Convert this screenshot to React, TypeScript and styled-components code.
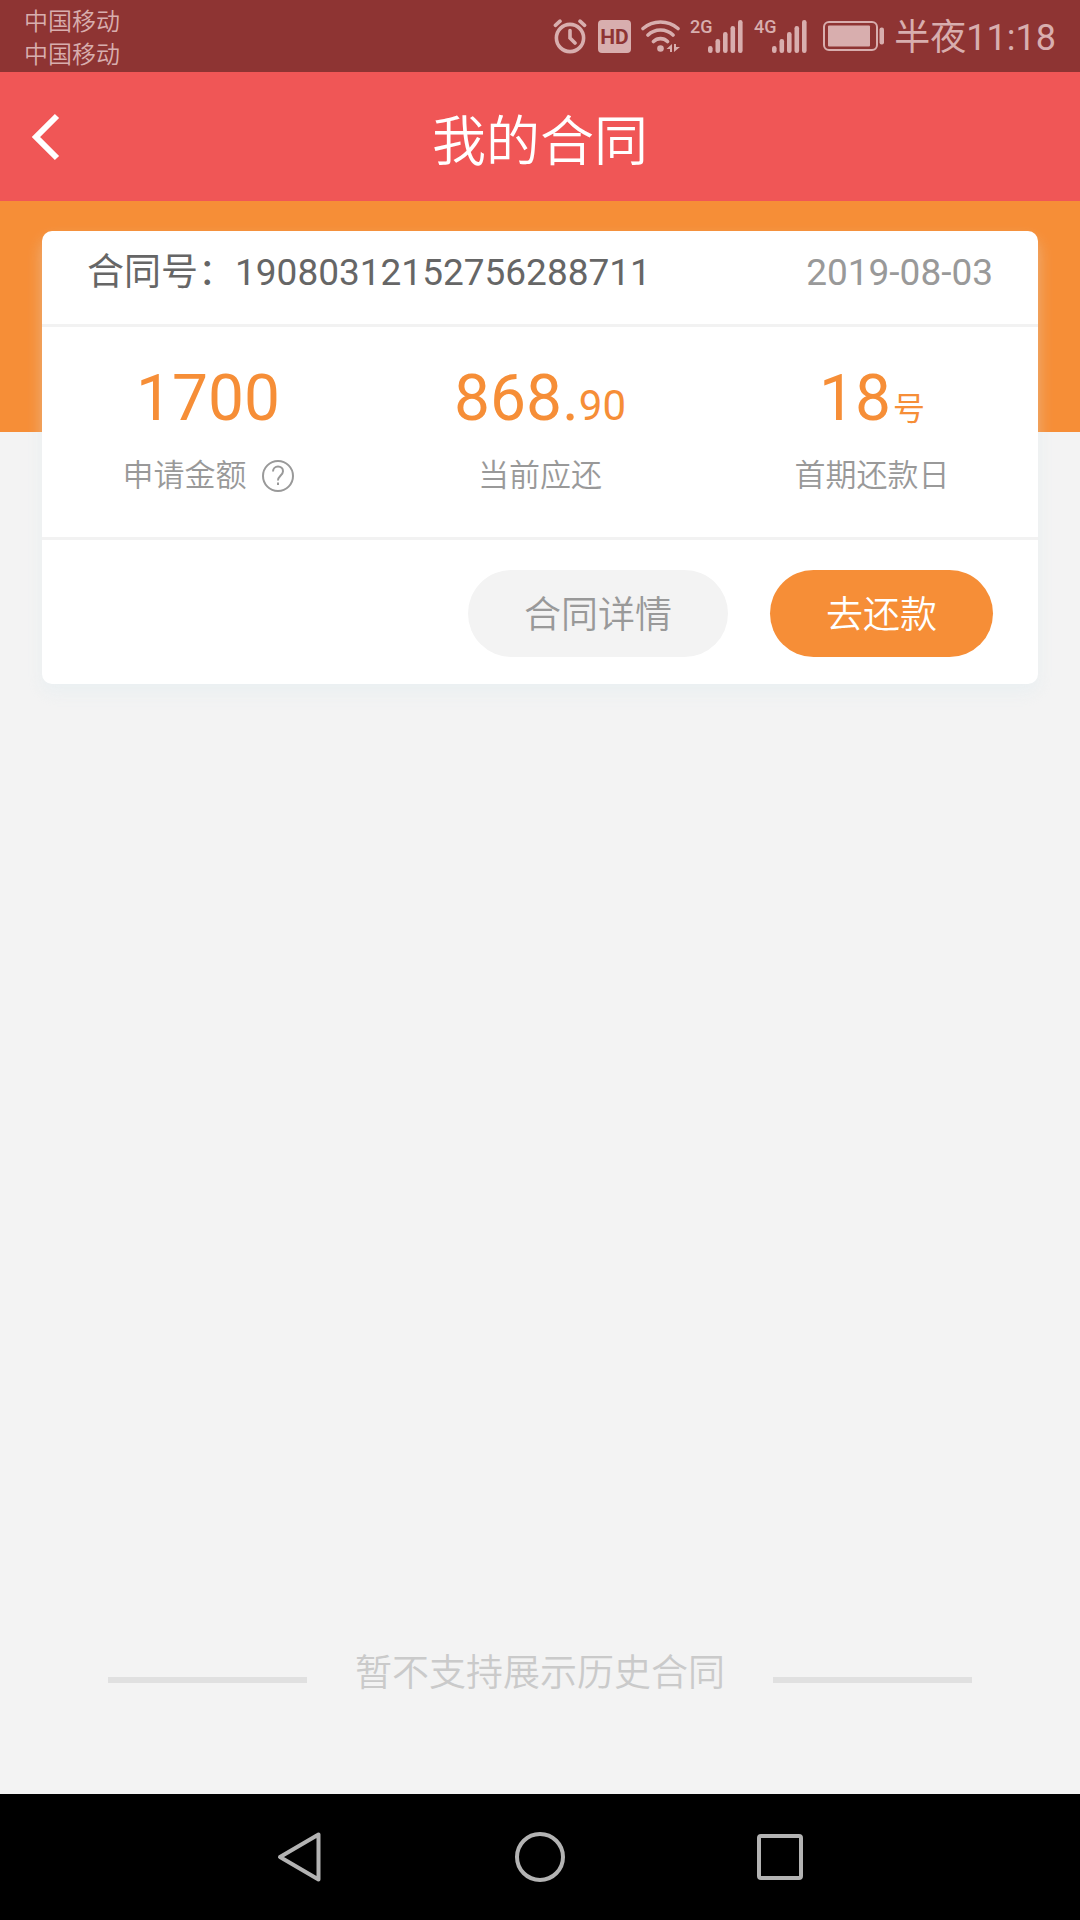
import React from "react";
import styled, { createGlobalStyle } from "styled-components";

const colors = {
  status: "#8e3433",
  statusInk: "#d8aeae",
  header: "#f05656",
  orange: "#f68e37",
  page: "#f3f3f3",
  line: "#f2f2f2",
  rule: "#e0e0e0",
  text: "#666666",
  muted: "#999999",
  faint: "#cacaca",
  nav: "#b3b3b3",
};

const GlobalStyle = createGlobalStyle`
  * { box-sizing: border-box; }
  body {
    margin: 0;
    background: ${colors.page};
    font-family: Roboto, "Noto Sans CJK SC", sans-serif;
  }
  button {
    border: 0;
    padding: 0;
    background: none;
    font: inherit;
    color: inherit;
    cursor: pointer;
  }
  svg { display: block; flex: none; }
`;

const Screen = styled.div`
  min-height: 100vh;
  display: flex;
  flex-direction: column;
`;

const StatusBar = styled.div`
  display: flex;
  align-items: center;
  justify-content: space-between;
  height: 72px;
  padding: 0 24px;
  background: ${colors.status};
  color: ${colors.statusInk};
`;

const Carriers = styled.div`
  display: flex;
  flex-direction: column;
  padding-top: 6px;
  font-size: 24px;
  font-weight: 350;
  line-height: 33px;
`;

const Indicators = styled.div`
  display: flex;
  align-items: center;
  gap: 10px;
`;

const Clock = styled.time`
  padding-top: 4px;
  font-size: 36px;
  line-height: 40px;
  white-space: nowrap;
`;

const Header = styled.header`
  display: grid;
  grid-template-columns: 90px 1fr 90px;
  align-items: center;
  height: 129px;
  background: ${colors.header};
  color: #ffffff;
`;

const BackButton = styled.button`
  display: flex;
  align-items: center;
  height: 100%;
  padding-left: 30px;
`;

const Title = styled.h1`
  margin: 0;
  padding-top: 12px;
  font-size: 54px;
  font-weight: 350;
  line-height: 80px;
  text-align: center;
`;

const Content = styled.main`
  flex: 1;
  display: flex;
  flex-direction: column;
  justify-content: space-between;
  padding: 30px 42px 81px;
  background: linear-gradient(${colors.orange}, ${colors.orange}) top / 100% 231px no-repeat ${colors.page};
`;

const Card = styled.section`
  border-radius: 10px;
  background: #ffffff;
  box-shadow: 0 9px 15px rgba(222, 234, 240, 0.4);
`;

const CardHead = styled.div`
  display: flex;
  justify-content: space-between;
  height: 96px;
  padding: 19px 45px;
  border-bottom: 3px solid ${colors.line};
  font-size: 37px;
  line-height: 46px;
  color: ${colors.text};
`;

const SignedOn = styled.time`
  color: ${colors.muted};
`;

const Figures = styled.dl`
  display: grid;
  grid-template-columns: repeat(3, 1fr);
  height: 213px;
  margin: 0;
  padding: 33px 0;
  border-bottom: 3px solid ${colors.line};
`;

const Figure = styled.div`
  display: flex;
  flex-direction: column-reverse;
  justify-content: flex-end;
  align-items: center;
  gap: 18px;
`;

const Amount = styled.dd`
  display: flex;
  align-items: baseline;
  height: 78px;
  margin: 0;
  font-size: 64px;
  line-height: 78px;
  color: ${colors.orange};
`;

const Cents = styled.span`
  font-size: 42px;
`;

const DayUnit = styled.span`
  margin-left: 2px;
  font-size: 32px;
`;

const Label = styled.dt`
  display: flex;
  align-items: center;
  gap: 15px;
  font-size: 31px;
  font-weight: 350;
  line-height: 40px;
  color: ${colors.muted};
`;

const Actions = styled.div`
  display: flex;
  justify-content: flex-end;
  gap: 42px;
  padding: 30px 45px 27px;
`;

const Pill = styled.button<{ $primary?: boolean }>`
  && {
    height: 87px;
    padding: 4px 56px 0;
    border-radius: 44px;
    background: ${(p) => (p.$primary ? colors.orange : colors.page)};
    color: ${(p) => (p.$primary ? "#ffffff" : colors.muted)};
    font-size: 37px;
    font-weight: 350;
    line-height: 54px;
  }
`;

const EndNote = styled.footer`
  display: flex;
  align-items: center;
  justify-content: space-between;
  gap: 48px;
  padding: 0 66px;
`;

const EndText = styled.p`
  margin: 0;
  padding-bottom: 12px;
  font-size: 37px;
  font-weight: 350;
  line-height: 54px;
  color: ${colors.faint};
  white-space: nowrap;
`;

const Rule = styled.span`
  flex: 1;
  height: 6px;
  background: ${colors.rule};
`;

const NavBar = styled.nav`
  display: flex;
  align-items: center;
  justify-content: center;
  gap: 188px;
  height: 126px;
  background: #000000;
  color: ${colors.nav};
`;

const NetworkText = styled.text`
  font-family: Roboto, sans-serif;
  font-size: 18px;
  font-weight: 500;
`;

const HdText = styled.text`
  font-family: Roboto, sans-serif;
  font-size: 21px;
  font-weight: 700;
`;

const AlarmIcon = () => (
  <svg width="35" height="36" viewBox="0 0 35 36" fill="none" stroke="currentColor" strokeWidth="3.6" strokeLinecap="round">
    <circle cx="17" cy="20" r="13.6" />
    <path d="M17 12.5V20l5 5M2.4 7.4 7 3.2M31.6 7.4 27 3.2" />
  </svg>
);

const HdIcon = () => (
  <svg width="33" height="34" viewBox="0 0 33 34">
    <rect width="33" height="33" y="1" rx="4" fill="currentColor" />
    <HdText x="16.5" y="25" textAnchor="middle" fill={colors.status}>HD</HdText>
  </svg>
);

const WifiIcon = () => (
  <svg width="39" height="34" viewBox="0 0 39 34" fill="none" stroke="currentColor" strokeWidth="3.6" strokeLinecap="round">
    <path d="M2 9.5A27 27 0 0 1 37 9.5M7 16A18 18 0 0 1 32 16M12.5 22.5A10 10 0 0 1 26.5 22.5" />
    <circle cx="19.5" cy="29.5" r="3.3" fill="currentColor" stroke="none" />
    <path d="M25.5 30 31 25V33H29V30ZM33 33V25H35V28H39Z" fill="currentColor" stroke="none" />
  </svg>
);

const SignalIcon = ({ network }: { network: string }) => (
  <svg width="54" height="48" viewBox="0 -6 54 48" fill="currentColor">
    <NetworkText x="0" y="15">{network}</NetworkText>
    {[7, 14, 21, 27, 33].map((h, i) => (
      <rect key={h} x={18 + i * 7.5} y={35 - h} width="4.6" height={h} rx="2.2" />
    ))}
  </svg>
);

const BatteryIcon = () => (
  <svg width="66" height="30" viewBox="0 0 66 30" fill="currentColor">
    <rect x="6" y="1" width="53" height="28" rx="5" fill="none" stroke="currentColor" strokeWidth="2" />
    <rect x="10" y="4.5" width="42" height="21" rx="1" />
    <rect x="61.5" y="6.5" width="4.5" height="17" rx="2" />
  </svg>
);

const HelpIcon = () => (
  <svg width="32" height="32" viewBox="0 0 32 32" fill="none" stroke="currentColor" strokeWidth="2">
    <circle cx="16" cy="16" r="15" />
    <path d="M11 11.500C11 8.500 13.200 6.500 16 6.500s5 1.900 5 4.700c0 4-5 4.600-5 9.300" />
    <path d="M16 22.500v2.500" />
  </svg>
);

const figures = [
  { label: "申请金额", value: "1700", help: true },
  { label: "当前应还", value: "868.", cents: "90" },
  { label: "首期还款日", value: "18", unit: "号" },
];

export default function App() {
  return (
    <>
      <GlobalStyle />
      <Screen>
        <StatusBar>
          <Carriers>
            <span>中国移动</span>
            <span>中国移动</span>
          </Carriers>
          <Indicators>
            <AlarmIcon />
            <HdIcon />
            <WifiIcon />
            <SignalIcon network="2G" />
            <SignalIcon network="4G" />
            <BatteryIcon />
            <Clock>半夜11:18</Clock>
          </Indicators>
        </StatusBar>

        <Header>
          <BackButton type="button" aria-label="返回">
            <svg width="30" height="48" viewBox="0 0 30 48" fill="none" stroke="#ffffff" strokeWidth="6">
              <path d="M27 3 6 24l21 21" />
            </svg>
          </BackButton>
          <Title>我的合同</Title>
        </Header>

        <Content>
          <Card>
            <CardHead>
              <span>合同号：19080312152756288711</span>
              <SignedOn>2019-08-03</SignedOn>
            </CardHead>
            <Figures>
              {figures.map((f) => (
                <Figure key={f.label}>
                  <Label>
                    {f.label}
                    {f.help && (
                      <button type="button" aria-label="说明">
                        <HelpIcon />
                      </button>
                    )}
                  </Label>
                  <Amount>
                    {f.value}
                    {f.cents && <Cents>{f.cents}</Cents>}
                    {f.unit && <DayUnit>{f.unit}</DayUnit>}
                  </Amount>
                </Figure>
              ))}
            </Figures>
            <Actions>
              <Pill type="button">合同详情</Pill>
              <Pill type="button" $primary>去还款</Pill>
            </Actions>
          </Card>

          <EndNote>
            <Rule />
            <EndText>暂不支持展示历史合同</EndText>
            <Rule />
          </EndNote>
        </Content>

        <NavBar>
          <button type="button" aria-label="返回上一页">
            <svg width="52" height="52" viewBox="0 0 52 52" fill="none" stroke="currentColor" strokeWidth="4" strokeLinejoin="round">
              <path d="M44.500 3.500v45L6 26Z" />
            </svg>
          </button>
          <button type="button" aria-label="主屏幕">
            <svg width="52" height="52" viewBox="0 0 52 52" fill="none" stroke="currentColor" strokeWidth="4">
              <circle cx="26" cy="26" r="23" />
            </svg>
          </button>
          <button type="button" aria-label="最近任务">
            <svg width="52" height="52" viewBox="0 0 52 52" fill="none" stroke="currentColor" strokeWidth="4">
              <rect x="5" y="5" width="42" height="42" rx="2" />
            </svg>
          </button>
        </NavBar>
      </Screen>
    </>
  );
}
